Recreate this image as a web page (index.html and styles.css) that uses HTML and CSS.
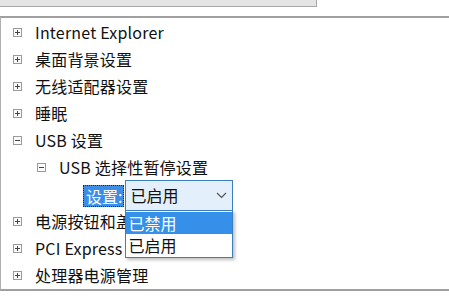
FILE: index.html
```html
<!DOCTYPE html>
<html>
<head>
<meta charset="utf-8">
<link rel="stylesheet" href="styles.css">
</head>
<body>
<div class="topbox"></div>
<div class="panel">
  <div class="row lvl0"><span class="exp plus"></span><span class="txt">Internet Explorer</span></div>
  <div class="row lvl0"><span class="exp plus"></span><span class="txt">桌面背景设置</span></div>
  <div class="row lvl0"><span class="exp plus"></span><span class="txt">无线适配器设置</span></div>
  <div class="row lvl0"><span class="exp plus"></span><span class="txt">睡眠</span></div>
  <div class="row lvl0"><span class="exp minus"></span><span class="txt">USB 设置</span></div>
  <div class="row lvl1"><span class="exp minus"></span><span class="txt">USB 选择性暂停设置</span></div>
  <div class="row lvl2">
    <span class="label">设置:</span>
    <div class="combo">
      <span class="combo-val">已启用</span>
      <svg class="chev" width="11" height="7" viewBox="0 0 11 7"><path d="M1 1 L5.5 5.5 L10 1" fill="none" stroke="#555" stroke-width="1.2"/></svg>
      <div class="list">
        <div class="opt sel">已禁用</div>
        <div class="opt">已启用</div>
      </div>
    </div>
  </div>
  <div class="row lvl0"><span class="exp plus"></span><span class="txt">电源按钮和盖子</span></div>
  <div class="row lvl0"><span class="exp plus"></span><span class="txt">PCI Express</span></div>
  <div class="row lvl0"><span class="exp plus"></span><span class="txt">处理器电源管理</span></div>
</div>
<div class="bottom"><div class="btn"></div></div>
</body>
</html>
```
FILE: styles.css
```css
html, body {
  margin: 0;
  padding: 0;
  background: #ffffff;
  overflow: hidden;
  width: 449px;
  height: 303px;
}
body {
  font-family: "Noto Sans CJK SC", "Noto Sans", sans-serif;
  font-size: 16px;
  color: #111;
}
.topbox {
  width: 316px;
  height: 6px;
  background: #e4e4e4;
  border-right: 1px solid #a8a8a8;
  border-bottom: 1px solid #a8a8a8;
}
.panel {
  margin-top: 9px;
  border-top: 2px solid #a0a0a0;
  border-left: 1px solid #b0b0b0;
  border-bottom: 2px solid #a0a0a0;
  padding-top: 1px;
  height: 270px;
  box-sizing: content-box;
}
.row {
  height: 27px;
  display: flex;
  align-items: center;
}
.lvl0 { padding-left: 12px; }
.lvl1 { padding-left: 36px; }
.lvl2 { padding-left: 82px; }
.exp {
  width: 9px;
  height: 9px;
  border: 1px solid #9a9a9a;
  box-sizing: border-box;
  position: relative;
  margin-right: 13px;
  flex: none;
  background: #fafafa;
}
.exp::before {
  content: "";
  position: absolute;
  left: 1px;
  top: 3px;
  width: 5px;
  height: 1px;
  background: #444;
}
.plus::after {
  content: "";
  position: absolute;
  left: 3px;
  top: 1px;
  width: 1px;
  height: 5px;
  background: #444;
}
.txt {
  line-height: 27px;
  white-space: nowrap;
  letter-spacing: 0.2px;
}
.label {
  background: #3a8ee8;
  color: #fff;
  outline: 1px dotted #1a2a40;
  outline-offset: -1px;
  height: 22px;
  line-height: 22px;
  padding: 0 2px 0 3px;
  margin-right: 1px;
  margin-top: 2px;
}
.combo {
  position: relative;
  width: 108px;
  height: 31px;
  box-sizing: border-box;
  border: 1px solid #3d7fbf;
  background: #e3effa;
  display: flex;
  align-items: center;
  padding-left: 4px;
  margin-top: 1px;
}
.combo-val { flex: 1; }
.chev { margin-right: 5px; margin-top: 1px; }
.list {
  position: absolute;
  left: -1px;
  top: 29px;
  width: 108px;
  box-sizing: border-box;
  border: 1px solid #3d7fbf;
  background: #fff;
  padding: 1px 0 1px;
  box-shadow: 2px 2px 3px rgba(0,0,0,0.25);
  z-index: 2;
}
.opt {
  height: 22px;
  line-height: 22px;
  padding-left: 2px;
}
.opt.sel {
  background: #3590ea;
  color: #fff;
}
.bottom {
  display: flex;
  justify-content: flex-end;
}
.btn {
  margin-top: 12px;
  width: 208px;
  height: 10px;
  border-top: 1px solid #a8a8a8;
  border-left: 1px solid #d0d0d0;
  background: #f6f6f6;
}
```
